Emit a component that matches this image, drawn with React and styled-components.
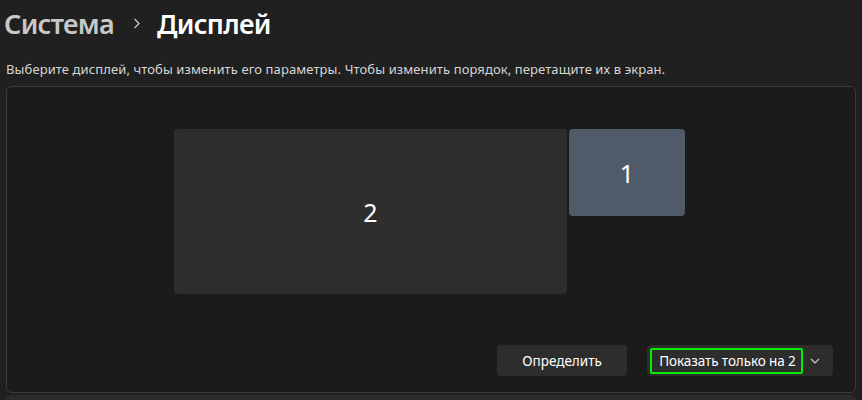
import React from "react";
import styled, { createGlobalStyle } from "styled-components";

const Global = createGlobalStyle`
  html, body { margin: 0; padding: 0; background: #202020; overflow: hidden; }
  body { font-family: "Noto Sans", "Open Sans", sans-serif; color: #fff; }
`;

const Page = styled.div`
  padding: 0 6px 0 6px;
  display: flex;
  flex-direction: column;
  height: 400px;
  box-sizing: border-box;
`;

const Breadcrumb = styled.h1`
  margin: 0 0 0 -2px;
  height: 46px;
  display: flex;
  align-items: center;
  font-size: 27px;
  font-weight: 600;
  letter-spacing: -0.7px;
`;

const Crumb = styled.span`
  color: ${(p) => (p.$current ? "#ffffff" : "#c8c8c8")};
`;

const Chevron = styled.svg`
  width: 8px;
  height: 11px;
  margin: 1px 16px 0 19px;
`;

const Hint = styled.p`
  margin: 14px 0 0 0;
  font-size: 13px;
  line-height: 18px;
  color: #d6d6d6;
  letter-spacing: 0.1px;
  white-space: nowrap;
`;

const Panel = styled.section`
  margin-top: 8px;
  height: 307px;
  box-sizing: border-box;
  background: #1b1b1b;
  border: 1px solid #3a3a3a;
  border-radius: 6px;
  display: flex;
  flex-direction: column;
  padding: 42px 22px 16px 22px;
`;

const Arrangement = styled.div`
  display: flex;
  justify-content: center;
  align-items: flex-start;
  gap: 2px;
  padding-right: 3px;
`;

const Monitor = styled.div`
  width: ${(p) => p.$w}px;
  height: ${(p) => p.$h}px;
  border-radius: 4px;
  background: ${(p) => (p.$active ? "#4f5b69" : "#2e2e2e")};
  display: flex;
  align-items: center;
  justify-content: center;
  font-size: 25px;
  font-weight: 400;
  color: #ffffff;
`;

const Actions = styled.div`
  margin-top: auto;
  display: flex;
  justify-content: flex-end;
  gap: 20px;
`;

const Button = styled.button`
  height: 31px;
  width: 130px;
  border: none;
  border-radius: 4px;
  background: #2d2d2d;
  color: #ffffff;
  font-family: "Noto Sans", "Open Sans", sans-serif;
  font-size: 13.5px;
  padding: 0;
`;

const Split = styled.div`
  height: 31px;
  width: 186px;
  border-radius: 4px;
  background: #2d2d2d;
  display: flex;
  align-items: center;
  padding-left: 3px;
  box-sizing: border-box;
`;

const SplitMain = styled.button`
  height: 26px;
  box-sizing: border-box;
  border: 2px solid #00f000;
  border-radius: 2px;
  background: transparent;
  color: #ffffff;
  font-family: "Noto Sans", "Open Sans", sans-serif;
  font-size: 13.5px;
  padding: 0 5px 0 7px;
  width: 153px;
  white-space: nowrap;
  letter-spacing: -0.1px;
`;

const SplitArrow = styled.div`
  flex: 1;
  display: flex;
  align-items: center;
  justify-content: center;
  padding-right: 6px;
`;

const NextCard = styled.div`
  margin-top: 2px;
  flex: 1;
  background: #2b2b2b;
  border-radius: 6px 6px 0 0;
`;

export default function App() {
  return (
    <>
      <Global />
      <Page>
        <Breadcrumb>
          <Crumb>Система</Crumb>
          <Chevron viewBox="0 0 8 11">
            <path d="M1.5 1 L6 5.5 L1.5 10" stroke="#c8c8c8" strokeWidth="1.3" fill="none" />
          </Chevron>
          <Crumb $current>Дисплей</Crumb>
        </Breadcrumb>
        <Hint>
          Выберите дисплей, чтобы изменить его параметры. Чтобы изменить порядок, перетащите их в экран.
        </Hint>
        <Panel>
          <Arrangement>
            <Monitor $w={393} $h={165}>2</Monitor>
            <Monitor $w={116} $h={87} $active>1</Monitor>
          </Arrangement>
          <Actions>
            <Button>Определить</Button>
            <Split>
              <SplitMain>Показать только на 2</SplitMain>
              <SplitArrow>
                <svg width="10" height="6" viewBox="0 0 10 6">
                  <path d="M1 1 L5 5 L9 1" stroke="#cfcfcf" strokeWidth="1.1" fill="none" />
                </svg>
              </SplitArrow>
            </Split>
          </Actions>
        </Panel>
        <NextCard />
      </Page>
    </>
  );
}
